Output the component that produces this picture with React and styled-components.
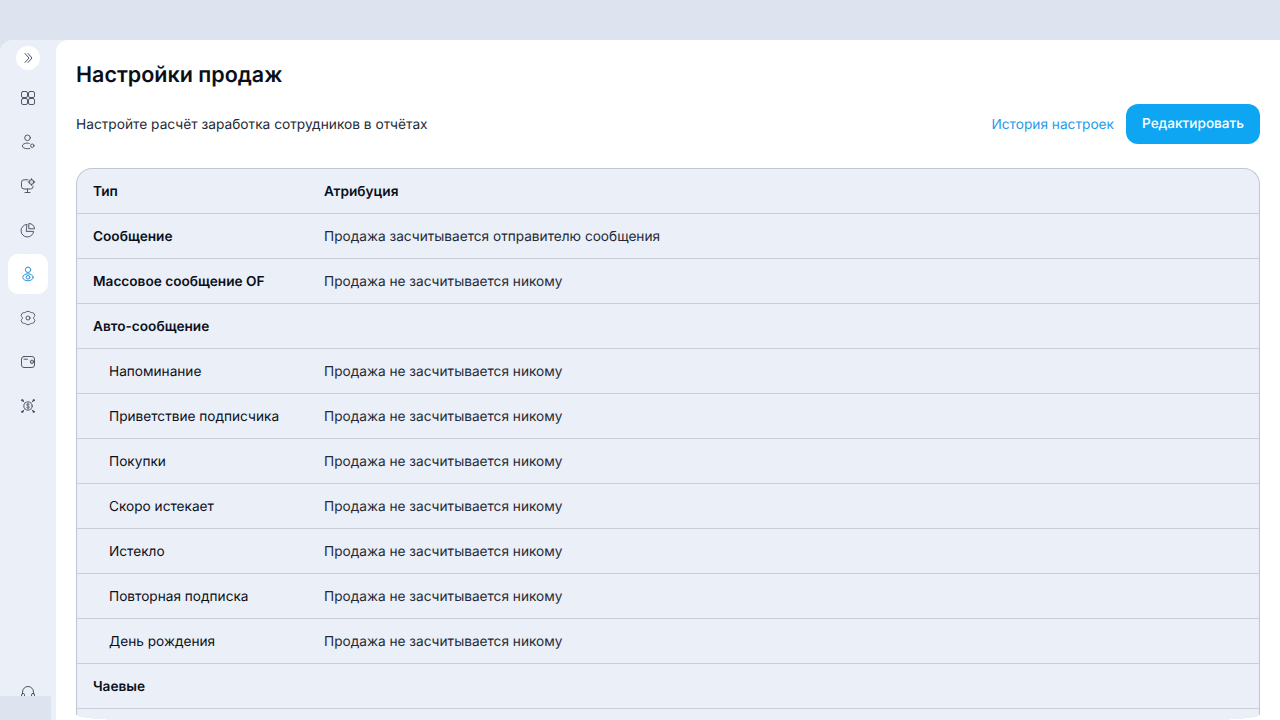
import React from "react";
import styled, { createGlobalStyle } from "styled-components";

const Global = createGlobalStyle`
  html, body { margin: 0; height: 100%; overflow: hidden; background: #dde4f0; }
  body { font-family: Inter, "Noto Sans", sans-serif; color: #0b0f1a; text-rendering: geometricPrecision; }
  #root { height: 100%; }
`;

const Page = styled.div`
  display: flex;
  flex-direction: column;
  height: 720px;
  overflow: hidden;
`;
const TopBar = styled.div`
  flex: 0 0 40px;
  background: #dde4f0;
`;
const Body = styled.div`
  flex: 1;
  min-height: 0;
  display: flex;
  background: #eaeff8;
  border-top-left-radius: 12px;
`;
const Sidebar = styled.nav`
  position: relative;
  flex: 0 0 56px;
  display: flex;
  flex-direction: column;
  align-items: center;
  padding-top: 6px;
  box-sizing: border-box;
`;
const Toggle = styled.button`
  width: 24px;
  height: 24px;
  padding: 0;
  border: 0;
  border-radius: 50%;
  background: #fff;
  color: #4a5261;
  display: flex;
  align-items: center;
  justify-content: center;
  margin-bottom: 8px;
`;
const NavItem = styled.div`
  width: 40px;
  height: 40px;
  margin-bottom: 4px;
  display: flex;
  align-items: center;
  justify-content: center;
  border-radius: 10px;
  background: ${(p) => (p.$active ? "#fff" : "transparent")};
  color: ${(p) => (p.$active ? "#1a8fdc" : "#4a5160")};
`;
const Support = styled.div`
  position: absolute;
  left: 20px;
  bottom: 20px;
  color: #4a5160;
  display: flex;
`;
const Footer = styled.div`
  position: absolute;
  left: 0;
  bottom: 0;
  width: 51px;
  height: 24px;
  background: #dde4f0;
`;
const Main = styled.main`
  position: relative;
  flex: 1;
  min-width: 0;
  background: #fff;
  border-top-left-radius: 12px;
  padding: 20px 20px 0;
  box-sizing: border-box;
  overflow: hidden;
`;
const Title = styled.h1`
  margin: 0;
  font-size: 21.500px;
  line-height: 30px;
  font-weight: 600;
  color: #0b0f1a;
`;
const Toolbar = styled.div`
  margin-top: 14px;
  margin-bottom: 24px;
  height: 40px;
  display: flex;
  align-items: center;
  justify-content: space-between;
`;
const Hint = styled.p`
  margin: 0;
  padding-top: 2px;
  font-size: 13.720px;
  color: #242a36;
`;
const Actions = styled.div`
  display: flex;
  align-items: center;
  gap: 12px;
`;
const HistoryLink = styled.a`
  padding-top: 2px;
  font-size: 13.700px;
  color: #1f9bec;
`;
const EditButton = styled.button`
  height: 40px;
  padding: 0 16px;
  border: 0;
  border-radius: 12px;
  background: #0ea5f2;
  color: #fff;
  font: 500 13.600px Inter, sans-serif;
  text-rendering: geometricPrecision;
`;
const Table = styled.div`
  border: 1px solid #c1c6d2;
  border-bottom: 0;
  border-radius: 16px 16px 0 0;
  background: #eaeff8;
  overflow: hidden;
`;
const Row = styled.div`
  display: grid;
  grid-template-columns: 231px 1fr;
  height: 45px;
  box-sizing: border-box;
  border-bottom: 1px solid #c9ced9;
  align-items: center;
  padding: 2px 0 0 16px;
  font-size: 13.650px;
`;
const TypeCell = styled.div`
  padding-left: ${(p) => (p.$nested ? "16px" : "0")};
  font-weight: ${(p) => (p.$nested ? 400 : 600)};
  color: #0b0f1a;
`;
const ValueCell = styled.div`
  font-weight: ${(p) => (p.$head ? 600 : 400)};
  color: ${(p) => (p.$head ? "#0b0f1a" : "#242a36")};
`;
const BottomCorner = styled.div`
  position: absolute;
  bottom: 0;
  ${(p) => (p.$right ? "right: 20px;" : "left: 20px;")}
  width: 50px;
  height: 5px;
  background: radial-gradient(
    ellipse 50px 5px at ${(p) => (p.$right ? "top left" : "top right")},
    transparent 97%,
    #fff 100%
  );
`;

const Ico = ({ children, size = 16 }) => (
  <svg width={size} height={size} viewBox="0 0 16 16" fill="none" stroke="currentColor" strokeWidth=".95" strokeLinecap="round" strokeLinejoin="round">
    {children}
  </svg>
);

const GEAR =
  "M6.600 1.600 Q8 .9 9.400 1.600 L10.500 2.300 Q11 2.600 11.500 2.600 L12.600 2.700 Q13.800 2.900 14.300 4.100 L14.800 5.400 Q15 6 14.500 6.500 L13.700 7.300 Q13.200 8 13.700 8.700 L14.500 9.500 Q15 10 14.800 10.600 L14.300 11.900 Q13.800 13.100 12.600 13.300 L11.500 13.400 Q11 13.400 10.500 13.700 L9.400 14.400 Q8 15.100 6.600 14.400 L5.500 13.700 Q5 13.400 4.500 13.400 L3.400 13.300 Q2.200 13.100 1.700 11.900 L1.200 10.600 Q1 10 1.500 9.500 L2.300 8.700 Q2.800 8 2.300 7.300 L1.500 6.500 Q1 6 1.200 5.400 L1.700 4.100 Q2.200 2.900 3.400 2.700 L4.500 2.600 Q5 2.600 5.500 2.300 Z";

const icons = [
  <Ico key="a">
    <rect x="1.500" y="1.500" width="6" height="6" rx="1.500" />
    <rect x="8.500" y="1.500" width="6" height="6" rx="1.500" />
    <rect x="1.500" y="8.500" width="6" height="6" rx="1.500" />
    <rect x="8.500" y="8.500" width="6" height="6" rx="1.500" />
  </Ico>,
  <Ico key="b">
    <circle cx="7.500" cy="3.800" r="2.800" />
    <path d="M9.300 9.400c-.6-.2-1.200-.3-1.900-.3-2.800 0-5 1.200-5 2.900s2.200 2.700 5 2.700c1 0 1.800-.1 2.500-.3" />
    <circle cx="12.300" cy="11.700" r="1.700" />
  </Ico>,
  <Ico key="c">
    <path d="M8 1.800H4A2.500 2.500 0 0 0 1.500 4.300v4.200A2.500 2.500 0 0 0 4 11h6.500A2.500 2.500 0 0 0 13 8.500V8" />
    <path d="M7.500 11v3.500M5 14.500h5" />
    <circle cx="11.500" cy="4" r="2.400" fill="currentColor" fillOpacity=".15" />
    <path d="M11.500 .7v.9M11.500 6.400v.9M8.200 4h.9M13.900 4h.9" />
  </Ico>,
  <Ico key="d">
    <path d="M6.600 2.400A6.300 6.300 0 1 0 13.600 9.400H6.600z" />
    <path d="M9.200 1.500a5.300 5.300 0 0 1 5.300 5.300H9.200z" />
  </Ico>,
  <Ico key="e">
    <circle cx="8" cy="3.800" r="2.700" />
    <ellipse cx="8" cy="11.300" rx="5.200" ry="3.500" />
    <circle cx="8" cy="11.300" r="1.800" />
  </Ico>,
  <Ico key="f">
    <path d={GEAR} />
    <circle cx="8" cy="8" r="2" />
  </Ico>,
  <Ico key="g">
    <rect x="1.500" y="2.500" width="13" height="11" rx="2.500" />
    <path d="M4 5.200h3.500" />
    <circle cx="12" cy="7.800" r="1.700" fill="currentColor" fillOpacity=".25" />
  </Ico>,
  <Ico key="h">
    <circle cx="8" cy="8" r="4.200" />
    <path d="M9.300 6.500C9 6 8.500 5.800 8 5.800c-.8 0-1.300.4-1.300 1.100 0 1.400 2.700.8 2.700 2.200 0 .7-.6 1.100-1.400 1.100-.6 0-1.100-.2-1.400-.7M8 5v6" strokeWidth=".8" />
    <path d="M2.500 2.500l1.500 1.500M13.500 2.500 12 4M13.500 13.500 12 12M2.500 13.500 4 12" />
    <circle cx="2.300" cy="2.300" r=".8" fill="currentColor" />
    <circle cx="13.700" cy="2.300" r=".8" fill="currentColor" />
    <circle cx="13.700" cy="13.700" r=".8" fill="currentColor" />
    <circle cx="2.300" cy="13.700" r=".8" fill="currentColor" />
  </Ico>,
];

const rows = [
  ["Сообщение", "Продажа засчитывается отправителю сообщения"],
  ["Массовое сообщение OF", "Продажа не засчитывается никому"],
  ["Авто-сообщение", ""],
  ["Напоминание", "Продажа не засчитывается никому", true],
  ["Приветствие подписчика", "Продажа не засчитывается никому", true],
  ["Покупки", "Продажа не засчитывается никому", true],
  ["Скоро истекает", "Продажа не засчитывается никому", true],
  ["Истекло", "Продажа не засчитывается никому", true],
  ["Повторная подписка", "Продажа не засчитывается никому", true],
  ["День рождения", "Продажа не засчитывается никому", true],
  ["Чаевые", ""],
  ["", ""],
];

export default function App() {
  return (
    <Page>
      <Global />
      <TopBar />
      <Body>
        <Sidebar>
          <Toggle>
            <svg width="12" height="12" viewBox="0 0 12 12" fill="none" stroke="currentColor" strokeWidth="1" strokeLinecap="round" strokeLinejoin="round">
              <path d="M3 1.500 7 6l-4 4.500M6 1.500 10 6l-4 4.500" />
            </svg>
          </Toggle>
          {icons.map((ic, i) => (
            <NavItem key={i} $active={i === 4}>{ic}</NavItem>
          ))}
          <Support>
            <Ico>
              <path d="M2.500 10V8a5.500 5.500 0 0 1 11 0v2" />
              <rect x="1.500" y="9.500" width="3" height="5" rx="1.200" />
              <rect x="11.500" y="9.500" width="3" height="5" rx="1.200" />
            </Ico>
          </Support>
          <Footer />
        </Sidebar>
        <Main>
          <Title>Настройки продаж</Title>
          <Toolbar>
            <Hint>Настройте расчёт заработка сотрудников в отчётах</Hint>
            <Actions>
              <HistoryLink>История настроек</HistoryLink>
              <EditButton>Редактировать</EditButton>
            </Actions>
          </Toolbar>
          <Table>
            <Row>
              <TypeCell>Тип</TypeCell>
              <ValueCell $head>Атрибуция</ValueCell>
            </Row>
            {rows.map(([t, v, nested], i) => (
              <Row key={i}>
                <TypeCell $nested={nested}>{t}</TypeCell>
                <ValueCell>{v}</ValueCell>
              </Row>
            ))}
          </Table>
          <BottomCorner />
          <BottomCorner $right />
        </Main>
      </Body>
    </Page>
  );
}
